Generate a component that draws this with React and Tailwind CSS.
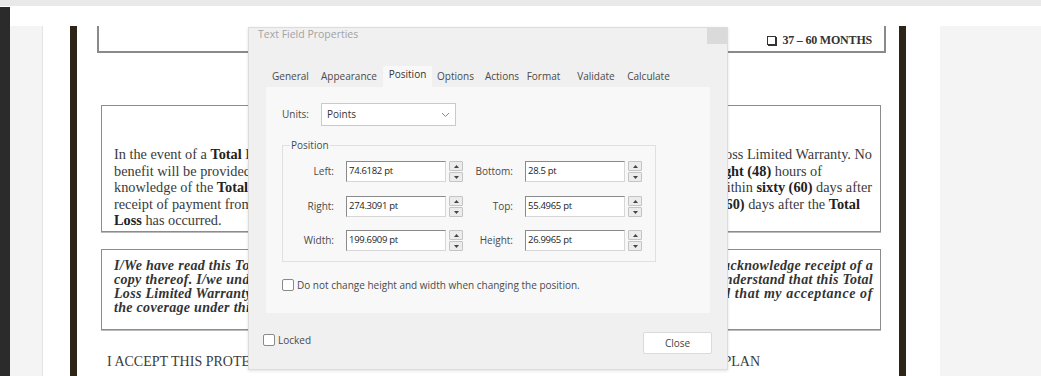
import React from "react";

function Spinner() {
  return (
    <div className="ml-[3px] flex h-[21px] w-[14px] flex-col gap-[1px]">
      <div className="flex h-[10px] items-center justify-center rounded-[1px] border border-[#c4c4c4] bg-[#ececec]">
        <svg width="5" height="3" viewBox="0 0 5 3"><path d="M0 3 L2.5 0 L5 3 Z" fill="#444" /></svg>
      </div>
      <div className="flex h-[10px] items-center justify-center rounded-[1px] border border-[#c4c4c4] bg-[#ececec]">
        <svg width="5" height="3" viewBox="0 0 5 3"><path d="M0 0 L2.5 3 L5 0 Z" fill="#444" /></svg>
      </div>
    </div>
  );
}

function NumField({ value }) {
  return (
    <div className="ml-[12px] flex h-[21px] w-[100px] items-center border-[1.5px] border-t-[#8a8a8a] border-l-[#8a8a8a] border-r-[#d6d6d6] border-b-[#d6d6d6] bg-white pl-[2px] text-[9.5px] tracking-[-0.3px] text-[#222]">
      {value}
    </div>
  );
}

function Row({ l1, v1, l2, v2, className = "" }) {
  return (
    <div className={"flex h-[21px] items-center " + className}>
      <span className="w-[51px] text-right">{l1}</span>
      <NumField value={v1} />
      <Spinner />
      <span className="w-[50px] text-right">{l2}</span>
      <NumField value={v2} />
      <Spinner />
    </div>
  );
}

function Check() {
  return <span className="inline-block h-[12px] w-[12px] shrink-0 rounded-[2px] border border-[#8a8a8a] bg-white" />;
}

const tabs = [
  ["General", "w-[49px]"],
  ["Appearance", "w-[68px]"],
  ["Position", "w-[49px]"],
  ["Options", "w-[47px]"],
  ["Actions", "w-[46px]"],
  ["Format", "w-[37px]"],
  ["Validate", "w-[68px]"],
  ["Calculate", "w-[37px]"],
];

export default function App() {
  return (
    <div className="relative h-[376px] w-[1041px] overflow-hidden bg-white">
      <div className="h-[6px] bg-[#e9e9e9]" />
      <div className="flex h-[370px]">
        <div className="mt-[1px] w-[10px] bg-[#2b2b2b]" />
        <div className="flex flex-1 flex-col">
          <div className="h-[20px] bg-white" />
          <div className="flex flex-1">
            <div className="w-[32px] bg-[#f4f4f4]" />
            <div className="flex w-[898px] border-l border-[#e4e4e4] bg-white">
              <div className="w-[27px]" />
              <div className="w-[7px] bg-[#2d2616]" />
              <div className="flex w-[822px] flex-col font-['Liberation_Serif',serif] text-[#3a3a3a]">
                {/* top box */}
                <div className="ml-[20px] flex h-[27px] w-[789px] items-end justify-end border-x-2 border-b-2 border-[#8a8a8a] pb-[3px] pr-[12px]">
                  <span className="mb-[3px] mr-[6px] inline-block h-[9px] w-[9px] border border-[#333] shadow-[1px_1px_0_#333]" />
                  <span className="text-[12px] font-bold leading-[16px] tracking-[-0.2px] text-[#333]">37 – 60 MONTHS</span>
                </div>
                {/* box 2 */}
                <div className="ml-[24px] mt-[52px] h-[127px] w-[780px] border border-[#8c8c8c] pl-[12px] pr-[8px] pt-[40px] text-[14.3px] leading-[16.5px] shadow-[0_1px_0_#bbb]">
                  <div className="flex justify-between whitespace-nowrap">
                    <span>In the event of a <b className="text-[#222]">Total</b> Lo</span>
                    <span>Loss Limited Warranty. No</span>
                  </div>
                  <div className="flex justify-between whitespace-nowrap">
                    <span>benefit will be provided u</span>
                    <span className="mr-[50px]"><b className="text-[#222]">eight (48)</b> hours of</span>
                  </div>
                  <div className="flex justify-between whitespace-nowrap">
                    <span>knowledge of the <b className="text-[#222]">Total</b> L</span>
                    <span>within <b className="text-[#222]">sixty (60)</b> days after</span>
                  </div>
                  <div className="flex justify-between whitespace-nowrap">
                    <span>receipt of payment from t</span>
                    <span className="mr-[12px]"><b className="text-[#222]">(60)</b> days after the <b className="text-[#222]">Total</b></span>
                  </div>
                  <div className="whitespace-nowrap">
                    <b className="text-[#222]">Loss</b> has occurred.
                  </div>
                </div>
                {/* box 3 */}
                <div className="ml-[24px] mt-[17px] h-[81px] w-[780px] border border-[#8c8c8c] pl-[12px] pr-[7px] pt-[9px] text-[14px] font-bold italic leading-[14px] tracking-[0.3px] text-[#333] shadow-[0_1px_0_#bbb]">
                  <div className="flex justify-between whitespace-nowrap">
                    <span>I/We have read this To</span>
                    <span>acknowledge receipt of a</span>
                  </div>
                  <div className="flex justify-between whitespace-nowrap">
                    <span>copy thereof. I/we und</span>
                    <span>understand that this Total</span>
                  </div>
                  <div className="flex justify-between whitespace-nowrap">
                    <span>Loss Limited Warranty</span>
                    <span className="tracking-[0.6px]">and that my acceptance of</span>
                  </div>
                  <div className="whitespace-nowrap">the coverage under thi</div>
                </div>
                <div className="ml-[30px] mt-[24px] flex justify-between whitespace-nowrap text-[14px] leading-[16px]">
                  <span>I ACCEPT THIS PROTE</span>
                  <span className="mr-[139px]">Y PLAN</span>
                </div>
              </div>
              <div className="w-[7px] bg-[#2d2616]" />
            </div>
            <div className="flex-1 bg-[#f4f4f4]" />
          </div>
        </div>
      </div>

      {/* dialog */}
      <div className="absolute left-[248px] top-[27px] flex h-[343px] w-[480px] flex-col border border-[#dcdcdc] bg-[#f0f0f0] font-['Open_Sans',sans-serif] text-[10px] text-[#4a4a4a] shadow-[0_1px_3px_rgba(0,0,0,0.12)]">
        <div className="flex h-[16px] items-start">
          <span className="pl-[9px] text-[10.5px] leading-[12px] text-[#a3a3a3]">Text Field Properties</span>
          <div className="ml-auto h-[16px] w-[20px] bg-[#dadada]" />
        </div>
        <div className="ml-[17px] mt-[22px] flex h-[21px]">
          {tabs.map(([t, w]) => (
            <div
              key={t}
              className={
                "flex justify-center whitespace-nowrap " +
                w +
                (t === "Position" ? " bg-[#f8f8f8] leading-[17px] text-[#333]" : " leading-[21px]")
              }
            >
              {t}
            </div>
          ))}
        </div>
        <div className="ml-[17px] h-[226px] w-[444px] bg-[#f8f8f8] pl-[16px]">
          <div className="mt-[16px] flex h-[23px] items-center">
            <span className="w-[39px]">Units:</span>
            <div className="flex h-[23px] w-[135px] items-center justify-between border border-[#cacaca] bg-white pl-[5px] pr-[5px] text-[#333]">
              <span>Points</span>
              <svg width="9" height="6" viewBox="0 0 9 6"><path d="M1 1 L4.5 4.5 L8 1" fill="none" stroke="#8a8a8a" strokeWidth="1" /></svg>
            </div>
          </div>
          <fieldset className="mt-[13px] h-[123px] w-[374px] border border-[#e0e0e0] pb-[8px]">
            <legend className="ml-[7px] px-[1px] leading-[12px]">Position</legend>
            <Row className="mt-[10px]" l1="Left:" v1="74.6182 pt" l2="Bottom:" v2="28.5 pt" />
            <Row className="mt-[14px]" l1="Right:" v1="274.3091 pt" l2="Top:" v2="55.4965 pt" />
            <Row className="mt-[13px]" l1="Width:" v1="199.6909 pt" l2="Height:" v2="26.9965 pt" />
          </fieldset>
          <div className="mt-[17px] flex items-center gap-[3px]">
            <Check />
            <span className="leading-[12px]">Do not change height and width when changing the position.</span>
          </div>
        </div>
        <div className="mt-[19px] flex items-start pl-[14px] pr-[15px]">
          <div className="mt-[2px] flex items-center gap-[3px]">
            <Check />
            <span className="leading-[12px]">Locked</span>
          </div>
          <div className="ml-auto flex h-[22px] w-[69px] items-center justify-center rounded-[2px] border border-[#dadada] bg-white text-[#444]">
            Close
          </div>
        </div>
      </div>
    </div>
  );
}
